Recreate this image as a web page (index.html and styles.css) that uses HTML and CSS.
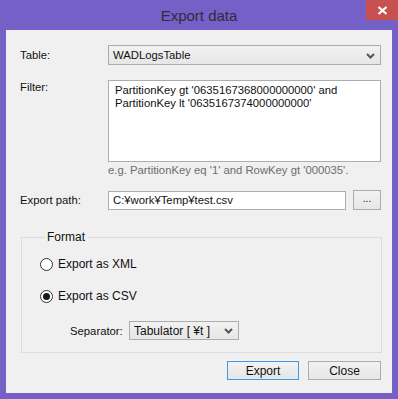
FILE: index.html
```html
<!DOCTYPE html>
<html lang="en">
<head>
<meta charset="UTF-8" />
<title>Export data</title>
<link rel="stylesheet" href="styles.css">
</head>
<body>

<div class="window">
  <div class="titlebar">
    <span class="title">Export data</span>
    <span class="close">
      <svg width="11" height="9" viewBox="0 0 11 9"><path d="M1.5 1 L9.5 8 M9.5 1 L1.5 8" stroke="#fff" stroke-width="2.2"/></svg>
    </span>
  </div>

  <div class="client">
    <div class="row row-table">
      <label class="lbl">Table:</label>
      <div class="combo wide">
        <span>WADLogsTable</span>
        <svg class="chev" width="9" height="6" viewBox="0 0 9 6"><path d="M1 1 L4.5 4.5 L8 1" fill="none" stroke="#555" stroke-width="2"/></svg>
      </div>
    </div>

    <div class="row row-filter">
      <label class="lbl">Filter:</label>
      <div class="textarea">PartitionKey gt '0635167368000000000' and<br>PartitionKey lt '0635167374000000000'</div>
    </div>
    <div class="hint">e.g. PartitionKey eq '1' and RowKey gt '000035'.</div>

    <div class="row row-path">
      <label class="lbl">Export path:</label>
      <div class="textbox">C:¥work¥Temp¥test.csv</div>
      <div class="btn browse">...</div>
    </div>

    <fieldset class="group">
      <legend>Format</legend>
      <div class="radio-row">
        <span class="radio"></span>
        <span>Export as XML</span>
      </div>
      <div class="radio-row">
        <span class="radio checked"></span>
        <span>Export as CSV</span>
      </div>
      <div class="sep-row">
        <span class="sep-label">Separator:</span>
        <div class="combo small">
          <span>Tabulator [ ¥t ]</span>
          <svg class="chev" width="9" height="6" viewBox="0 0 9 6"><path d="M1 1 L4.5 4.5 L8 1" fill="none" stroke="#555" stroke-width="2"/></svg>
        </div>
      </div>
    </fieldset>

    <div class="actions">
      <div class="btn action default">Export</div>
      <div class="btn action">Close</div>
    </div>
  </div>
</div>

</body>
</html>
```

FILE: styles.css
```css
/* Window chrome */
body {
  margin: 0;
  width: 398px;
  height: 399px;
  background: #7460c6;
  font-family: 'Liberation Sans', Arial, sans-serif;
  font-size: 11.3px;
  color: #111;
  overflow: hidden;
}

.window {
  width: 398px;
  height: 399px;
}

.titlebar {
  position: relative;
  height: 30px;
  display: flex;
  justify-content: center;
  align-items: center;
}

.title {
  font-size: 15px;
  color: #2d2d3a;
  padding-top: 1px;
}

.close {
  position: absolute;
  top: 0;
  right: 0;
  width: 32px;
  height: 20px;
  background: #c75050;
  display: flex;
  justify-content: center;
  align-items: center;
}

.client {
  margin: 0 6px;
  height: 363px;
  background: #f0f0f0;
  padding: 15px 11px 0 14px;
  box-sizing: border-box;
}

/* Form rows */
.row {
  display: flex;
  align-items: flex-start;
}

.lbl {
  width: 88px;
  flex: none;
  line-height: 20px;
}

.row-filter {
  margin-top: 15px;
}

.row-filter .lbl {
  line-height: 13px;
  padding-top: 1px;
}

.combo {
  height: 20px;
  box-sizing: border-box;
  border: 1px solid #acacac;
  background: linear-gradient(#f2f2f2, #e6e6e6);
  display: flex;
  align-items: center;
  justify-content: space-between;
  padding: 0 5px 0 4px;
}

.combo.wide {
  width: 273px;
}

.chev {
  margin-top: 1px;
}

.textarea {
  width: 273px;
  height: 82px;
  box-sizing: border-box;
  border: 1px solid #abadb3;
  background: #fff;
  padding: 3px 6px;
  line-height: 12.5px;
  white-space: nowrap;
}

.hint {
  margin: 1px 0 0 88px;
  color: #6d6d6d;
  line-height: 14px;
}

.row-path {
  margin-top: 13px;
  align-items: center;
}

.textbox {
  width: 238px;
  height: 19px;
  box-sizing: border-box;
  border: 1px solid #abadb3;
  background: #fff;
  padding: 0 4px;
  line-height: 17px;
}

.btn {
  box-sizing: border-box;
  border: 1px solid #acacac;
  background: linear-gradient(#f2f2f2, #e6e6e6);
  display: flex;
  justify-content: center;
  align-items: center;
}

.browse {
  width: 28px;
  height: 20px;
  margin-left: 7px;
  font-size: 10px;
  padding-bottom: 3px;
}

/* Format group */
.group {
  margin: 20px 0 0 1px;
  width: 361px;
  height: 123px;
  box-sizing: border-box;
  border: 1px solid #dcdcdc;
  padding: 13px 0 0 18px;
}

.group legend {
  padding: 0 2px;
  margin-left: 5px;
  font-size: 12px;
}

.radio-row {
  display: flex;
  align-items: center;
  gap: 5px;
  height: 14px;
  margin-bottom: 18px;
  font-size: 12px;
}

.radio {
  width: 11px;
  height: 11px;
  border: 1px solid #333;
  border-radius: 50%;
  background: #fff;
  display: flex;
  justify-content: center;
  align-items: center;
}

.radio.checked::after {
  content: '';
  width: 7px;
  height: 7px;
  border-radius: 50%;
  background: #1a1a1a;
}

.sep-row {
  display: flex;
  align-items: center;
  margin-left: 30px;
  margin-top: 6px;
}

.sep-label {
  width: 59px;
}

.combo.small {
  width: 110px;
  height: 19px;
  font-size: 12px;
}

/* Bottom buttons */
.actions {
  display: flex;
  justify-content: flex-end;
  gap: 9px;
  margin-top: 8px;
}

.action {
  width: 73px;
  height: 19px;
  font-size: 12px;
}

.action.default {
  width: 72px;
  border-color: #3c9ae8;
}
```
